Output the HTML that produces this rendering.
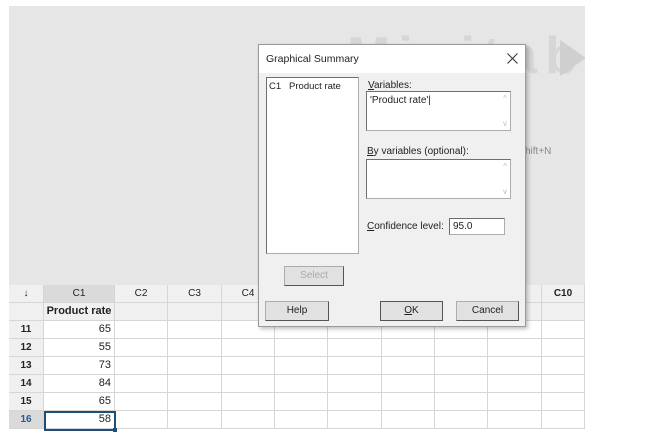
<!DOCTYPE html>
<html><head><meta charset="utf-8"><style>
*{margin:0;padding:0;box-sizing:border-box}
body{width:671px;height:446px;background:#fff;position:relative;overflow:hidden;font-family:"Liberation Sans",sans-serif;font-size:10px;color:#222}
.a{position:absolute}
.gray{left:9px;top:6px;width:576px;height:279px;background:#e6e6e6;overflow:hidden}
.wm{font-size:52px;font-weight:bold;color:#d6d6d6;left:338px;top:20px;letter-spacing:8px;white-space:nowrap}
.grid{left:9px;top:285px;width:576px;height:147px}
.cell{position:absolute;border-right:1px solid #d6d6d6;border-bottom:1px solid #d6d6d6;height:18px;line-height:17px;font-size:10px}
.dlg{left:258px;top:44px;width:268px;height:283px;background:#f0f0f0;border:1px solid #9a9a9a;box-shadow:2px 2px 4px rgba(0,0,0,.25)}
.tb{position:absolute;background:#fff;border:1px solid #adadad;border-top-color:#6e6e6e;border-left-color:#6e6e6e}
.btn{position:absolute;height:20px;background:#e1e1e1;border:1px solid #adadad;border-right-color:#555;border-bottom-color:#555;text-align:center;line-height:18px;font-size:10px}
</style></head><body>
<div class="a gray"><div class="a wm">Minitab</div>
<svg class="a" style="left:551px;top:34px" width="26" height="40"><polygon points="0,0 26,18 0,36" fill="#cfcfcf"/></svg></div>
<div class="a" style="left:525px;top:146px;color:#888;font-size:10px">hift+N</div>
<div class="a grid" id="g"></div>
<script>
var g=document.getElementById('g');
var cols=[0,35,106,159,213,266,319,373,426,479,533,576];
var names=['↓','C1','C2','C3','C4','','','','','','C10'];
var rows=['11','12','13','14','15','16'],vals=['65','55','73','84','65','58'];
var h='';
for(var c=0;c<11;c++){var x=cols[c],w=cols[c+1]-x;
 h+='<div class="cell" style="left:'+x+'px;top:0;width:'+w+'px;background:'+(c==1?'#dadada':'#f0f0f0')+';text-align:center;font-weight:'+(c==10?'bold':'normal')+'">'+names[c]+'</div>';
 h+='<div class="cell" style="left:'+x+'px;top:18px;width:'+w+'px;background:#f0f0f0;font-weight:bold;text-align:center;font-size:11px">'+(c==1?'Product rate':'')+'</div>';
 for(var r=0;r<6;r++){var y=36+r*18;
  if(c==0)h+='<div class="cell" style="left:0;top:'+y+'px;width:'+w+'px;background:'+(r==5?'#dadada':'#f0f0f0')+';text-align:center;font-weight:bold;color:'+(r==5?'#2a5a8a':'#222')+'">'+rows[r]+'</div>';
  else h+='<div class="cell" style="left:'+x+'px;top:'+y+'px;width:'+w+'px;background:#fff;text-align:right;padding-right:3px;font-size:11px">'+(c==1?vals[r]:'')+'</div>';
 }}
h+='<div style="position:absolute;left:35px;top:126px;width:72px;height:20px;border:2px solid #1f4e79"></div><div style="position:absolute;left:104px;top:143px;width:4px;height:4px;background:#1f4e79"></div>';
g.innerHTML=h;
</script>
<div class="a dlg">
 <div class="a" style="left:0;top:0;width:266px;height:28px;background:#fff"></div>
 <div class="a" style="left:7px;top:8px;font-size:10.5px">Graphical Summary</div>
 <svg class="a" style="left:248px;top:8px" width="11" height="11"><path d="M0.5 0.5L10.5 10.5M10.5 0.5L0.5 10.5" stroke="#333" stroke-width="1"/></svg>
 <div class="tb" style="left:7px;top:32px;width:93px;height:177px;"><span style="position:absolute;left:2px;top:3px;white-space:nowrap;font-size:9.5px">C1&nbsp;&nbsp;&nbsp;Product rate</span></div>
 <div class="a" style="left:109px;top:35px"><u>V</u>ariables:</div>
 <div class="tb" style="left:107px;top:46px;width:145px;height:40px"><span style="position:absolute;left:3px;top:3px">'Product rate'|</span><span style="position:absolute;right:3px;top:2px;color:#bbb;font-size:8px">^</span><span style="position:absolute;right:3px;bottom:2px;color:#bbb;font-size:8px">v</span></div>
 <div class="a" style="left:108px;top:101px"><u>B</u>y variables (optional):</div>
 <div class="tb" style="left:107px;top:114px;width:145px;height:40px"><span style="position:absolute;right:3px;top:2px;color:#bbb;font-size:8px">^</span><span style="position:absolute;right:3px;bottom:2px;color:#bbb;font-size:8px">v</span></div>
 <div class="a" style="left:108px;top:176px"><u>C</u>onfidence level:</div>
 <div class="tb" style="left:190px;top:173px;width:56px;height:17px"><span style="position:absolute;left:3px;top:2px">95.0</span></div>
 <div class="btn" style="left:25px;top:221px;width:60px;color:#aaa">Select</div>
 <div class="btn" style="left:6px;top:256px;width:64px">Help</div>
 <div class="btn" style="left:121px;top:256px;width:63px;border:1px solid #555"><u>O</u>K</div>
 <div class="btn" style="left:197px;top:256px;width:63px">Cancel</div>
</div>
</body></html>
